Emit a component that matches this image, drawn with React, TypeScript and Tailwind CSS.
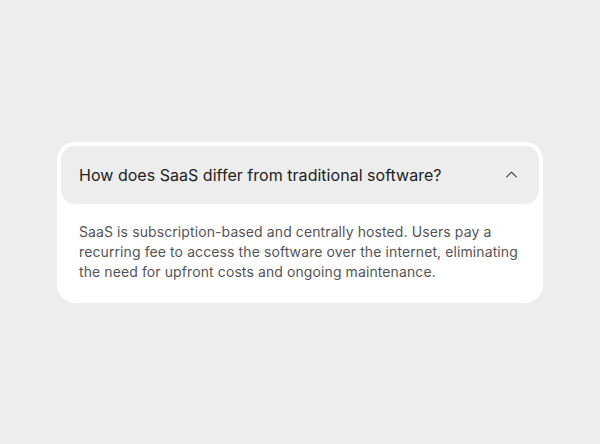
import { ChevronUp } from "lucide-react";

export default function App() {
  return (
    <div
      className="w-[600px] h-[444px] bg-[#ededed] flex items-center justify-center"
      style={{ fontFamily: "Inter, 'Liberation Sans', sans-serif" }}
    >
      <div className="w-[486px] rounded-[18px] bg-white p-1">
        <button className="w-full h-[58px] rounded-[14px] bg-[#ededed] flex items-center justify-between pl-[18px] pr-[18px] text-left">
          <span className="text-[16px] text-[#222] tracking-[0.03px]">
            How does SaaS differ from traditional software?
          </span>
          <ChevronUp className="w-[19px] h-[19px] text-[#333]" strokeWidth={1.3} />
        </button>
        <div className="px-[18px] pt-[18px] pb-[17px]">
          <p className="text-[14px] leading-[20px] text-[#555] tracking-[0.1px]">
            SaaS is subscription-based and centrally hosted. Users pay a recurring fee to access the
            software over the internet, eliminating the need for upfront costs and ongoing maintenance.
          </p>
        </div>
      </div>
    </div>
  );
}
